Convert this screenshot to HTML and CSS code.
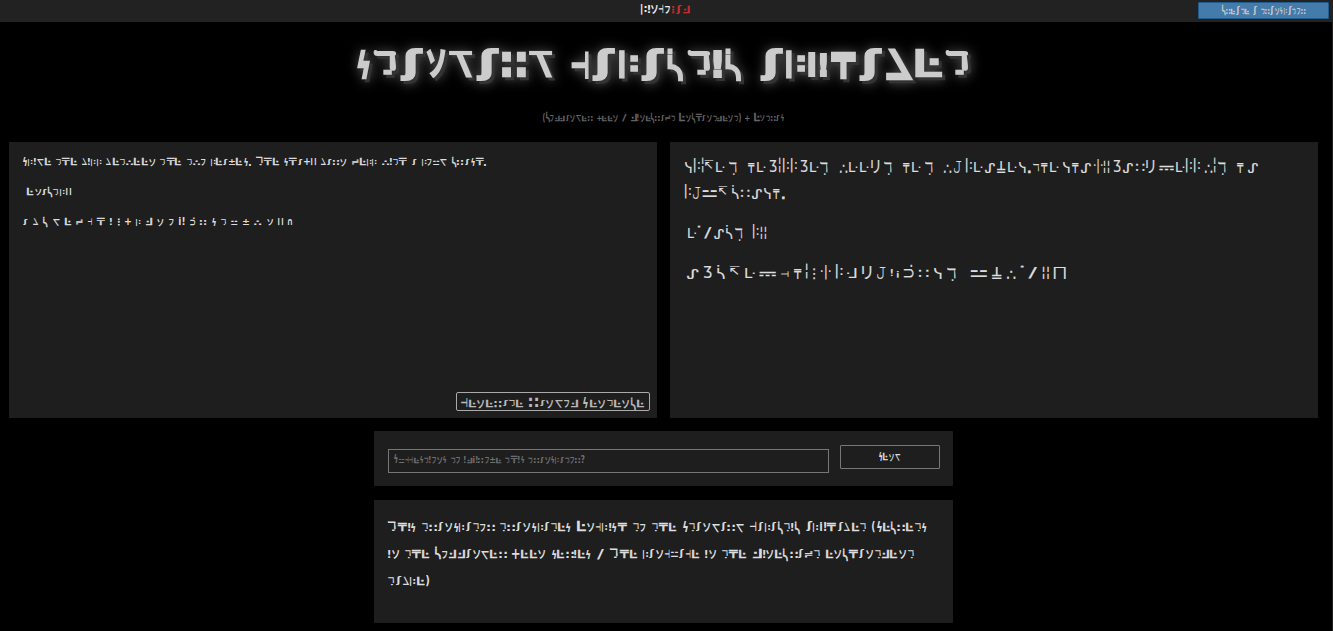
FILE: index.html
```html
<!DOCTYPE html>
<html lang="en">
<head>
<meta charset="utf-8">
<title>Standard Galactic Alphabet</title>
<link rel="stylesheet" href="styles.css">
</head>
<body>
<header class="navbar">
  <div class="brand"><span class="sga" data-width="29" data-scale="1.2">Lingo</span><span class="sga brand-red" data-width="17">JAm</span></div>
  <a class="create"><span class="sga" data-width="83" data-scale="0.95">CreAte A trAnslAtor</span></a>
</header>
<h1 class="title"><span class="sga" data-width="610" data-face="title">standard galactic alphabet</span></h1>
<p class="subtitle"><span class="sga" data-width="241" data-scale="0.95">(Commander keen / Minecraft Enchantment) + Extras</span></p>
<main class="panels">
  <section class="panel source">
    <div class="line"><span class="sga" data-width="464">Slide the bill between the two leaves. The shaky barn fell with a loud crash.</span></div>
    <div class="line indent"><span class="sga" data-width="44">exactly</span></div>
    <div class="line"><span class="sga" data-width="270">a b c d e f g h i j k l m n o p q r s t u v w x y z</span></div>
    <button class="generate"><span class="sga" data-width="183" data-scale="1.15">Generate Random Sentence</span></button>
  </section>
  <section class="panel output">
    <div class="out-line"><span class="sga" data-width="574" data-face="wide">slide the bill between the two leaves.The shaky barn fell with a</span></div>
    <div class="out-line"><span class="sga" data-width="100" data-face="wide">loud crash.</span></div>
    <div class="out-line gap exact"><span class="sga" data-width="78" data-face="wide">exactly</span></div>
    <div class="out-line gap"><span class="sga" data-width="379" data-face="wide">a b c d e f g h i j k l m n o p q r s t u v w x y z</span></div>
  </section>
</main>
<section class="card suggest">
  <div class="field"><span class="sga" data-width="191" data-scale="0.95">Suggestions to improve this translator?</span></div>
  <button class="send"><span class="sga" data-width="21">Send</span></button>
</section>
<section class="card about">
  <div class="about-line"><span class="sga" data-width="539" data-scale="1.2">This translator translates English to the Standard Galactic Alphabet (Secrets</span></div>
  <div class="about-line"><span class="sga" data-width="526" data-scale="1.2">in the Commander Keen series / The language in the Minecraft enchantment</span></div>
  <div class="about-line"><span class="sga" data-width="41" data-scale="1.2">table)</span></div>
</section>
<script src="glyphs.js"></script>
</body>
</html>
```
FILE: styles.css
```css
* { box-sizing: border-box; }
body { margin: 0; height: 631px; overflow: hidden; background: #000; color: #ddd; border-right: 1px solid #222; font-family: "DejaVu Sans", sans-serif; }
.navbar { height: 22px; background: #222; display: grid; grid-template-columns: 1fr 50px 1fr; align-items: start; color: #eee; }
.brand { grid-column: 2; display: flex; gap: 1px; padding-top: 13px; }
.brand-red { color: #c9302c; }
.create { justify-self: end; width: 131px; height: 17px; margin: 2px 3px 0 0; padding: 11px 0 0 23px; background: #447bab; border: 1px solid #1f5b8b; border-radius: 1px; color: #ccc; }
.sga { display: flex; align-items: flex-start; height: 0; }
.cell { position: relative; flex: none; height: 0; }
.glyph { position: absolute; left: 0; top: 0; height: 0; line-height: 0; font-size: 40px; font-weight: bold; font-family: "DejaVu Sans", "Noto Sans CJK JP", sans-serif; white-space: pre; transform-origin: 0 0; }
.face-small .light { font-weight: normal; -webkit-text-stroke: 2px currentColor; }
.face-wide .glyph { font-weight: normal; -webkit-text-stroke: .5px currentColor; }
.title { margin: 0; height: 90px; padding: 56px 0 0 358px; color: #ccc; filter: drop-shadow(3px 3px 0 #333) drop-shadow(0 0 6px rgba(255, 255, 255, .3)); }
.face-title .glyph { -webkit-text-stroke: 2.5px #ccc; stroke-linejoin: round; }
.face-title .light { font-weight: normal; -webkit-text-stroke: 3px #ccc; }
.subtitle { margin: 0; height: 30px; padding: 9px 0 0 543px; color: #666; }
.panels { display: grid; grid-template-columns: 648px 648px; gap: 13px; margin-left: 9px; }
.panel { height: 276px; background: #1e1e1e; padding-left: 14px; }
.source { display: flex; flex-direction: column; padding-top: 23px; }
.line { height: 30px; }
.indent { padding-left: 4px; }
.generate { align-self: flex-end; width: 194px; height: 19px; margin: auto 7px 7px 0; padding: 0 0 0 4px; background: none; border: 1px solid #aaa; border-radius: 2px; color: #bbb; display: flex; }
.generate .sga { margin-top: 14px; }
.output { padding: 30px 0 0 15px; }
.out-line { height: 26px; }
.gap { margin-top: 14px; }
.exact { padding-left: 3px; }
.out-line:last-child { padding-left: 2px; }
.card { width: 579px; margin-left: 374px; background: #1e1e1e; border-radius: 1px; }
.suggest { height: 55px; margin-top: 13px; padding: 14px 13px 14px 14px; display: flex; gap: 11px; align-items: flex-start; }
.field { flex: none; width: 441px; height: 24px; margin-top: 4px; padding: 13px 0 0 5px; border: 1px solid #777; color: #707070; }
.send { flex: none; display: flex; width: 100px; height: 24px; padding: 0 0 0 38px; border: 1px solid #777; border-radius: 1px; background: none; color: #ddd; }
.send .sga { margin-top: 14px; }
.about { height: 123px; margin-top: 14px; padding: 31px 14px 0; }
.about-line { height: 27px; }
```
FILE: glyphs.js
```js
// Each entry: character, ink width, ink top, ink bottom, flags (x/y flip, l light), trailing advance.
const small = {
  a: ['ʃ', 4.5, -6.5, 0], b: ['∠', 5, -7, 0, 'x'], c: ['ᓵ', 4, -7.5, 2.3, 'l'], d: ['∠', 6.5, -6, 1, 'y'],
  e: ['Ŀ', 6, -6, 0, 'l'], f: ['≓', 6.5, -6, -.5], g: ['⊣', 4, -7, 0], h: ['₸', 7.5, -6.8, 0, 'l'],
  i: ['!', 1.8, -7, 0], j: ['⋮', 1.8, -7, 0], k: ['+', 6, -6.5, 0], l: ['|:', 4.3, -6.5, 1],
  m: ['Ŀ', 6, -6, 0, 'xl'], n: ['ソ', 6.3, -6.5, 1], o: ['フ', 4.5, -5.5, 1], p: ['i!', 5.2, -7.5, 0],
  q: ['⊃̇', 5, -8, 0], r: ['∷', 6.2, -5.5, 0], s: ['ϟ', 3.8, -7, .5], t: ['ℸ̣', 5, -6.5, 0],
  u: ['⚍', 6, -5, -.5], v: ['±', 6, -6, -.5], w: ['∴', 7, -5, 0], x: ['ソ', 6, -6.5, 0],
  y: ['||', 5, -6.5, 0], z: ['∩', 4, -6.5, 0],
  S: ['ϟ', 4.2, -9, .5], T: ['ℸ̣', 7, -8.7, 0], A: ['ʃ', 5.5, -8.5, .7], C: ['ᓵ', 4.8, -9, 1, 'l'],
  G: ['⊣', 5.5, -8, 0], E: ['Ŀ', 7.5, -8.5, 0, 'l'], M: ['Ŀ', 7.5, -7.5, 0, 'xl'], L: ['|:', 5, -7.5, 1],
  J: ['⋮', 2, -8, 0], K: ['+', 6.5, -8, .5], R: ['∷', 8, -8, 0],
  '.': ['.', 2, -1, 1], ',': [',', 2, -1, 2], '(': ['(', 2.5, -8, 1.5], ')': [')', 2.5, -8, 1.5],
  '/': ['/', 6, -7.5, 1], '+': ['+', 6, -6.5, 0], '?': ['?', 4, -7.5, .5]
};
const title = {
  s: ['ϟ', 11, -28, 0], t: ['ℸ̣', 21, -27, -3], a: ['ʃ', 21, -29, 2], n: ['ソ', 18, -27, 0],
  d: ['\\̅', 21, -26, -1, 'l'], r: ['∷', 22, -25, -2], g: ['⊣', 16, -26, 0], l: ['|:', 17, -27, 0],
  c: ['ᓵ', 14, -29, 2, 'l'], i: ['!', 7, -27, -1], p: ['i!', 17, -26, -2], h: ['₸', 23, -25, 0, 'l'],
  b: ['∠', 24, -29, 1, 'x'], e: ['Ŀ', 25, -28, -2, 'l']
};
const wide = {
  a: ['ᔑ', 11, -9, 1], b: ['Ʒ', 7, -11, 1], c: ['ᓵ', 7, -14, 1], d: ['↸', 9, -12, -3],
  e: ['ᒷ', 9, -10, 0], f: ['⎓', 15, -6, -2], g: ['⊣', 7, -7, -1], h: ['₸', 7, -10, 1],
  i: ['╎', 1.3, -14, 1], j: ['⋮', 2, -10, 1], k: ['·|·', 9, -13, 1], l: ['|:', 6, -14, 1],
  m: ['ᒲ', 9, -10, 0], n: ['リ', 9, -12, 1], o: ['𝙹', 8, -11, 1], p: ['!¡', 7, -9, 0],
  q: ['⊃̇', 9, -13, 0], r: ['∷', 9, -8, -1], s: ['ᓭ', 7, -10, 1], t: ['ℸ̣', 8, -10, 3, '', 10],
  u: ['⚍', 15, -8, -1], v: ['₸', 9, -11, 1, 'y'], w: ['∴', 8, -8, 0], x: ['˙/', 15, -12, 0],
  y: ['¦¦', 5.5, -11, 1], z: ['⨅', 11, -11, 1], T: ['ℸ', 6.5, -9, -1], '.': ['.', 3, -2, 1]
};
const faces = {
  small: { map: small, gap: 1.2, space: 4 },
  title: { map: title, gap: 5, space: 15 },
  wide: { map: wide, gap: 2.5, space: 2.5 }
};
const ctx = document.createElement('canvas').getContext('2d');

document.querySelectorAll('.sga').forEach(el => {
  const name = el.dataset.face || 'small';
  const face = faces[name];
  const k = Number(el.dataset.scale || 1);
  const text = el.textContent;
  el.setAttribute('aria-label', text);
  el.classList.add('face-' + name);
  el.textContent = '';
  const advances = [...text].map(c => c === ' ' ? face.space : face.map[c][1] + face.gap + (face.map[c][5] || 0));
  const total = advances.reduce((a, b) => a + b, 0) - face.gap;
  const kx = Number(el.dataset.width) / total;
  [...text].forEach((c, i) => {
    const cell = document.createElement('span');
    cell.className = 'cell';
    cell.style.width = advances[i] * kx + 'px';
    el.append(cell);
    if (c === ' ') return;
    const [ch, w, top, bottom, flags = ''] = face.map[c];
    const g = document.createElement('span');
    g.className = flags.includes('l') ? 'glyph light' : 'glyph';
    g.textContent = ch;
    cell.append(g);
    const cs = getComputedStyle(g);
    ctx.font = `${cs.fontWeight} 40px ${cs.fontFamily}`;
    const m = ctx.measureText(ch);
    const base = (m.fontBoundingBoxAscent - m.fontBoundingBoxDescent) / 2;
    let sx = w * kx / (m.actualBoundingBoxLeft + m.actualBoundingBoxRight);
    let sy = (bottom - top) * k / (m.actualBoundingBoxAscent + m.actualBoundingBoxDescent);
    if (flags.includes('x')) sx = -sx;
    if (flags.includes('y')) sy = -sy;
    const tx = sx > 0 ? sx * m.actualBoundingBoxLeft : -sx * m.actualBoundingBoxRight;
    const ty = top * k - sy * (sy > 0 ? base - m.actualBoundingBoxAscent : base + m.actualBoundingBoxDescent);
    g.style.transform = `translate(${tx}px, ${ty}px) scale(${sx}, ${sy})`;
  });
});
```
